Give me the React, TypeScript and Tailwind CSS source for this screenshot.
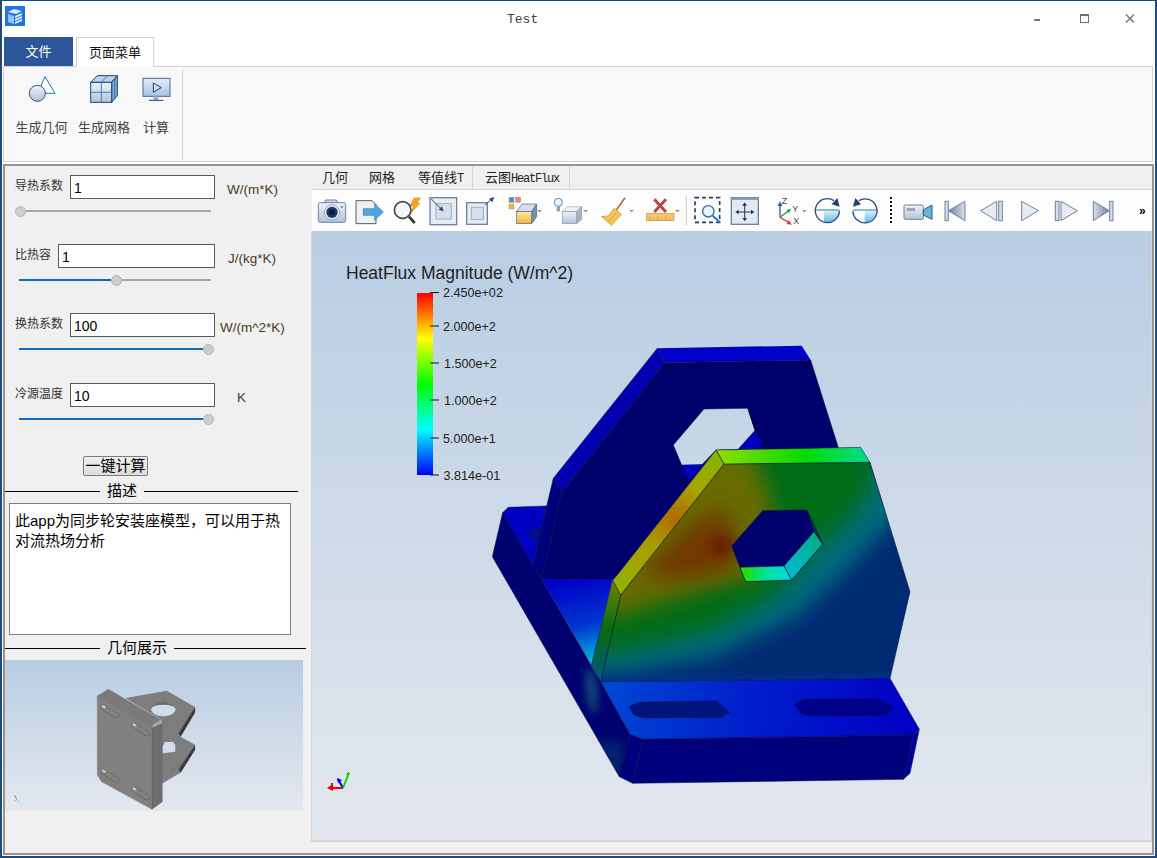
import type { ReactNode } from "react";

const cjk = "font-['Liberation_Sans','Noto_Sans_CJK_SC',sans-serif]";

function Z3({ children }: { children: ReactNode }) {
  return <g transform="translate(310 160) scale(0.33333)">{children}</g>;
}

function Z4({ children }: { children: ReactNode }) {
  return <g transform="translate(730 160) scale(0.33333)">{children}</g>;
}

function Tool({ from, to, children }: { from: number; to: number; children: ReactNode }) {
  return (
    <svg width={to - from} height={41} viewBox={`${from} 190 ${to - from} 41`} className="block shrink-0">
      {children}
    </svg>
  );
}

function Drop({ x }: { x: number }) {
  return <polygon points={`${x - 7},150 ${x + 7},150 ${x},157`} fill="#8a8a8a" />;
}

function Defs() {
  return (
    <svg width="0" height="0" className="absolute">
      <defs>
        <linearGradient id="steel" x1="0" y1="0" x2="0" y2="1">
          <stop offset="0" stopColor="#eef2f7" />
          <stop offset="1" stopColor="#b3c2d6" />
        </linearGradient>
        <linearGradient id="sky" x1="0" y1="0" x2="0" y2="1">
          <stop offset="0" stopColor="#e4edf8" />
          <stop offset="1" stopColor="#a6c3e4" />
        </linearGradient>
        <linearGradient id="amber" x1="0" y1="0" x2="0" y2="1">
          <stop offset="0" stopColor="#ffe9a0" />
          <stop offset="1" stopColor="#f5b33c" />
        </linearGradient>
        <linearGradient id="cone" x1="0" y1="0" x2="1" y2="0">
          <stop offset="0" stopColor="#6d7f96" />
          <stop offset="1" stopColor="#d8dfe8" />
        </linearGradient>
        <linearGradient id="coneR" x1="1" y1="0" x2="0" y2="0">
          <stop offset="0" stopColor="#6d7f96" />
          <stop offset="1" stopColor="#d8dfe8" />
        </linearGradient>
        <linearGradient id="wedge" x1="0" y1="0" x2="0" y2="1">
          <stop offset="0" stopColor="#d8f0fb" />
          <stop offset="1" stopColor="#62bce8" />
        </linearGradient>
      </defs>
    </svg>
  );
}

function Toolbar() {
  const frame = "#6d82a2";
  return (
    <div className="flex h-[41px] shrink-0 bg-[#fdfdfd] ml-[1px]">
      <Tool from={312} to={351}>
        <Z3>
          <rect x="45" y="120" width="36" height="12" rx="3" fill="#c9d6e6" stroke={frame} strokeWidth="3" />
          <rect x="25" y="128" width="82" height="59" rx="6" fill="url(#steel)" stroke={frame} strokeWidth="3" />
          <circle cx="66" cy="157" r="23" fill="#dbe5f1" stroke="#7f93ad" strokeWidth="2" />
          <circle cx="66" cy="157" r="17" fill="#25386b" />
          <circle cx="66" cy="157" r="9" fill="#0f1c45" />
          <circle cx="96" cy="140" r="3" fill="#5d7396" />
        </Z3>
      </Tool>
      <Tool from={351} to={388}>
        <Z3>
          <path d="M138 122 H186 L198 134 V191 H138 Z" fill="#f0f0f0" stroke="#5a5a5a" strokeWidth="3" />
          <polygon points="160,146 194,146 194,131 220,156 194,180 194,166 160,166" fill="#4ea6e2" stroke="#2d7fc0" strokeWidth="2" />
        </Z3>
      </Tool>
      <Tool from={388} to={423}>
        <Z3>
          <polygon points="312,114 332,114 320,130 330,130 302,160 311,138 300,138" fill="#f5a623" stroke="#c77a10" strokeWidth="1.5" />
          <circle cx="278" cy="150" r="25" fill="#f1f4f8" fillOpacity="0.85" stroke="#4a4a4a" strokeWidth="5" />
          <line x1="297" y1="170" x2="314" y2="189" stroke="#333" strokeWidth="8" />
        </Z3>
      </Tool>
      <Tool from={423} to={461}>
        <Z3>
          <rect x="360" y="113" width="80" height="81" fill="#e8edf3" stroke={frame} strokeWidth="4" />
          <rect x="378" y="131" width="46" height="46" fill="#d8dfe8" stroke="#a0aec0" strokeWidth="3" />
          <line x1="364" y1="117" x2="396" y2="149" stroke="#2a4a7c" strokeWidth="3" />
          <polygon points="401,154 386,149 396,139" fill="#2a4a7c" />
        </Z3>
      </Tool>
      <Tool from={461} to={499}>
        <Z3>
          <rect x="470" y="128" width="62" height="65" fill="#e8edf3" stroke={frame} strokeWidth="4" />
          <rect x="484" y="142" width="36" height="37" fill="#d8dfe8" stroke="#a0aec0" strokeWidth="3" />
          <line x1="524" y1="136" x2="544" y2="118" stroke="#2a4a7c" strokeWidth="3" />
          <polygon points="553,111 547,127 537,116" fill="#2a4a7c" />
        </Z3>
      </Tool>
      <Tool from={499} to={548}>
        <Z3>
          <rect x="597" y="112" width="15" height="15" fill="#4a8fd0" stroke="#b08a50" strokeWidth="1" />
          <rect x="617" y="112" width="15" height="15" fill="#e28a8a" stroke="#a06060" strokeWidth="1" />
          <rect x="597" y="132" width="15" height="15" fill="#f3b04a" stroke="#b07a20" strokeWidth="1" />
          <polygon points="620,155 636,132 680,132 665,155" fill="#d5dde8" stroke="#4c6490" strokeWidth="2" />
          <polygon points="665,155 680,132 680,170 665,191" fill="#7a8da8" stroke="#4c6490" strokeWidth="2" />
          <rect x="620" y="155" width="45" height="36" fill="url(#amber)" stroke="#4c6490" strokeWidth="2" />
          <Drop x={689} />
        </Z3>
      </Tool>
      <Tool from={548} to={594}>
        <Z3>
          <circle cx="745" cy="127" r="12" fill="#eaf5fd" stroke="#4a8fc0" strokeWidth="3" />
          <rect x="740" y="139" width="10" height="15" fill="#8aa0bb" />
          <polygon points="757,155 772,140 815,140 800,155" fill="#eef1f5" stroke="#9aa7b8" strokeWidth="2" />
          <polygon points="800,155 815,140 815,178 800,191" fill="#a9b4c2" stroke="#8a97a8" strokeWidth="2" />
          <rect x="757" y="155" width="43" height="36" fill="url(#steel)" stroke="#8a97a8" strokeWidth="2" />
          <Drop x={827} />
        </Z3>
      </Tool>
      <Tool from={594} to={640}>
        <Z3>
          <line x1="945" y1="113" x2="917" y2="153" stroke="#a9722a" strokeWidth="5" />
          <polygon points="912,145 934,163 905,196 874,170 895,168" fill="#f5c45a" stroke="#cf8a22" strokeWidth="2" />
          <line x1="918" y1="160" x2="896" y2="186" stroke="#cf8a22" strokeWidth="2" />
          <Drop x={965} />
        </Z3>
      </Tool>
      <Tool from={640} to={682}>
        <Z3>
          <line x1="1033" y1="118" x2="1068" y2="156" stroke="#c2413f" strokeWidth="9" />
          <line x1="1068" y1="118" x2="1033" y2="156" stroke="#c2413f" strokeWidth="9" />
          <rect x="1009" y="161" width="83" height="21" fill="#f4c76c" stroke="#d08d2c" strokeWidth="2" />
          <path d="M1020 170 V181 M1032 174 V181 M1044 170 V181 M1056 174 V181 M1068 170 V181 M1080 174 V181" stroke="#b87a20" strokeWidth="2" />
          <Drop x={1102} />
        </Z3>
      </Tool>
      <Tool from={682} to={692}>
        <Z3>
          <line x1="1129" y1="108" x2="1129" y2="196" stroke="#c9c9c9" strokeWidth="3" />
        </Z3>
      </Tool>
      <Tool from={692} to={727}>
        <Z3>
          <rect x="1155" y="113" width="74" height="74" fill="none" stroke="#2a3c63" strokeWidth="5" strokeDasharray="12 9" />
          <circle cx="1195" cy="154" r="17" fill="#e9f3fb" stroke="#3b6ea5" strokeWidth="4" />
          <line x1="1208" y1="167" x2="1230" y2="187" stroke="#2a78c2" strokeWidth="6" />
        </Z3>
      </Tool>
      <Tool from={727} to={765}>
        <Z4>
          <rect x="4" y="113" width="81" height="80" fill="#e3e9f1" stroke={frame} strokeWidth="4" />
          <rect x="4" y="113" width="81" height="7" fill="#8ba0bd" />
          <path d="M44 133 V178 M22 156 H67" stroke="#20345c" strokeWidth="3" />
          <path d="M44 127 L37 137 H51 Z M44 184 L37 174 H51 Z M16 156 L26 149 V163 Z M73 156 L63 149 V163 Z" fill="#20345c" />
        </Z4>
      </Tool>
      <Tool from={765} to={810}>
        <Z4>
          <line x1="150" y1="172" x2="150" y2="135" stroke="#2a5ab0" strokeWidth="4" />
          <polygon points="150,124 143,138 157,138" fill="#2a5ab0" />
          <line x1="150" y1="172" x2="174" y2="154" stroke="#1f9a3c" strokeWidth="4" />
          <polygon points="184,146 170,150 176,160" fill="#1f9a3c" />
          <line x1="150" y1="172" x2="174" y2="186" stroke="#e0393a" strokeWidth="4" />
          <polygon points="186,194 170,192 176,180" fill="#e0393a" />
          <text x="155" y="131" fontSize="27" fill="#444" fontFamily="Liberation Sans">Z</text>
          <text x="187" y="155" fontSize="27" fill="#444" fontFamily="Liberation Sans">Y</text>
          <text x="190" y="192" fontSize="27" fill="#444" fontFamily="Liberation Sans">X</text>
          <Drop x={223} />
        </Z4>
      </Tool>
      <Tool from={810} to={847}>
        <Z4>
          <path d="M282 152 H328 A36 36 0 0 1 282 186 Z" fill="url(#wedge)" />
          <path d="M258 150 H328" stroke="#1f73b7" strokeWidth="3" />
          <path d="M328 152 A36 36 0 1 1 312 122" fill="none" stroke="#2a4e7c" strokeWidth="4" />
          <polygon points="329,140 305,133 322,114" fill="#1f3f70" />
        </Z4>
      </Tool>
      <Tool from={847} to={885}>
        <Z4>
          <path d="M404 152 H440 A36 36 0 0 1 404 187 Z" fill="url(#wedge)" />
          <path d="M370 150 H441" stroke="#1f73b7" strokeWidth="3" />
          <path d="M369 152 A36 36 0 1 0 386 122" fill="none" stroke="#2a4e7c" strokeWidth="4" />
          <polygon points="369,140 393,133 376,114" fill="#1f3f70" />
        </Z4>
      </Tool>
      <Tool from={885} to={897}>
        <Z4>
          <line x1="483" y1="111" x2="483" y2="190" stroke="#111" strokeWidth="6" strokeDasharray="6 6" />
        </Z4>
      </Tool>
      <Tool from={897} to={937}>
        <Z4>
          <rect x="522" y="135" width="58" height="43" rx="4" fill="url(#steel)" stroke={frame} strokeWidth="3" />
          <rect x="530" y="144" width="25" height="9" fill="#9aa6b6" />
          <polygon points="580,150 606,135 606,178 580,165" fill="#63b5e0" stroke="#33557f" strokeWidth="3" />
        </Z4>
      </Tool>
      <Tool from={937} to={973}>
        <Z4>
          <rect x="645" y="124" width="10" height="58" fill="#d5dde8" stroke={frame} strokeWidth="3" />
          <polygon points="655,152 705,124 705,182" fill="url(#cone)" stroke={frame} strokeWidth="3" />
        </Z4>
      </Tool>
      <Tool from={973} to={1010}>
        <Z4>
          <polygon points="752,152 800,124 800,182" fill="#e7ecf2" stroke={frame} strokeWidth="3" />
          <rect x="806" y="124" width="11" height="58" fill="#d5dde8" stroke={frame} strokeWidth="3" />
        </Z4>
      </Tool>
      <Tool from={1010} to={1048}>
        <Z4>
          <polygon points="875,124 925,152 875,182" fill="#e7ecf2" stroke={frame} strokeWidth="3" />
        </Z4>
      </Tool>
      <Tool from={1048} to={1084}>
        <Z4>
          <rect x="976" y="124" width="11" height="58" fill="#d5dde8" stroke={frame} strokeWidth="3" />
          <polygon points="993,124 1042,152 993,182" fill="#e7ecf2" stroke={frame} strokeWidth="3" />
        </Z4>
      </Tool>
      <Tool from={1084} to={1122}>
        <Z4>
          <polygon points="1090,124 1138,152 1090,182" fill="url(#coneR)" stroke={frame} strokeWidth="3" />
          <rect x="1139" y="124" width="10" height="58" fill="#d5dde8" stroke={frame} strokeWidth="3" />
        </Z4>
      </Tool>
      <div className="flex-1 pl-[17px] pt-[11px] font-['Liberation_Sans',sans-serif] text-[12px] leading-[20px] font-bold text-black">»</div>
    </div>
  );
}

function Part() {
  const edge = "#0a0a3a";
  return (
    <g transform="translate(480 340) scale(0.33333)">
      <defs>
        <filter id="soft" filterUnits="userSpaceOnUse" x="-200" y="-200" width="1900" height="1900">
          <feGaussianBlur stdDeviation="32" />
        </filter>
        <filter id="softer" filterUnits="userSpaceOnUse" x="-200" y="-200" width="1900" height="1900">
          <feGaussianBlur stdDeviation="15" />
        </filter>
        <clipPath id="plate">
          <polygon points="732,372 1170,367 1290,755 1230,1015 362,1025 422,765" />
        </clipPath>
        <clipPath id="side">
          <polygon points="37,650 68,518 158,675 185,718 362,1025 450,1183 418,1310" />
        </clipPath>
        <linearGradient id="flangeTop" x1="362" y1="1025" x2="1300" y2="1150" gradientUnits="userSpaceOnUse">
          <stop offset="0" stopColor="#0048d4" />
          <stop offset="0.45" stopColor="#0020cc" />
          <stop offset="1" stopColor="#0000c4" />
        </linearGradient>
        <linearGradient id="wedgeBlue" x1="270" y1="720" x2="330" y2="975" gradientUnits="userSpaceOnUse">
          <stop offset="0" stopColor="#0000c8" />
          <stop offset="0.55" stopColor="#0038d0" />
          <stop offset="1" stopColor="#00c0e0" />
        </linearGradient>
        <linearGradient id="topFace" x1="708" y1="340" x2="1160" y2="340" gradientUnits="userSpaceOnUse">
          <stop offset="0" stopColor="#94dc00" />
          <stop offset="0.6" stopColor="#00dc00" />
          <stop offset="1" stopColor="#00dc8c" />
        </linearGradient>
        <linearGradient id="chamfer" x1="710" y1="340" x2="400" y2="740" gradientUnits="userSpaceOnUse">
          <stop offset="0" stopColor="#84b400" />
          <stop offset="0.25" stopColor="#a8a400" />
          <stop offset="0.45" stopColor="#b06c00" />
          <stop offset="0.65" stopColor="#aa9a00" />
          <stop offset="1" stopColor="#94b400" />
        </linearGradient>
        <linearGradient id="lower" x1="400" y1="730" x2="350" y2="1000" gradientUnits="userSpaceOnUse">
          <stop offset="0" stopColor="#6a8000" />
          <stop offset="0.5" stopColor="#086c10" />
          <stop offset="1" stopColor="#005a70" />
        </linearGradient>
        <linearGradient id="holeBottom" x1="790" y1="700" x2="930" y2="700" gradientUnits="userSpaceOnUse">
          <stop offset="0" stopColor="#20e000" />
          <stop offset="0.5" stopColor="#00e0a0" />
          <stop offset="1" stopColor="#00dcd8" />
        </linearGradient>
        <linearGradient id="holeRight" x1="915" y1="690" x2="1020" y2="590" gradientUnits="userSpaceOnUse">
          <stop offset="0" stopColor="#00b8d0" />
          <stop offset="1" stopColor="#00b080" />
        </linearGradient>
      </defs>

      <polygon points="68,518 85,502 200,498 158,675" fill="#0000c4" stroke={edge} strokeWidth="1.5" />
      <ellipse cx="166" cy="582" rx="18" ry="18" fill="#00108c" stroke={edge} strokeWidth="1.5" />
      <polygon points="532,25 965,17 992,60 555,68" fill="#0000c8" />
      <polygon points="532,25 555,68 245,458 220,415" fill="#0000b0" stroke={edge} strokeWidth="1.5" />
      <polygon points="220,415 245,458 185,718 158,675" fill="#00007c" stroke={edge} strokeWidth="1.5" />
      <path
        d="M555 68 L992 60 L1090 370 L700 420 L398 720 L185 718 L245 458 Z M672 207 L580 315 L605 375 L665 375 L708 330 L775 328 L825 272 L803 205 Z"
        fillRule="evenodd"
        fill="#00006c"
        stroke={edge}
        strokeWidth="1.5"
      />
      <polygon points="775,328 825,272 850,310 830,328" fill="#0000c0" stroke={edge} strokeWidth="1.5" />
      <polygon points="803,205 825,272 850,310" fill="#000048" />
      <polygon points="605,375 668,373 630,420" fill="#0000c4" />

      <polygon points="37,650 68,518 158,675 185,718 362,1025 450,1183 418,1310" fill="#000070" stroke={edge} strokeWidth="1.5" />
      <g clipPath="url(#side)">
        <ellipse cx="335" cy="1050" rx="13" ry="70" fill="#15607a" filter="url(#softer)" transform="rotate(-6 335 1050)" />
        <polygon points="330,1200 430,1200 430,1320 400,1320" fill="#002070" filter="url(#softer)" />
      </g>
      <polygon points="185,718 398,717 335,975" fill="url(#wedgeBlue)" stroke={edge} strokeWidth="1" />
      <polygon points="362,1025 1230,1015 1318,1168 1300,1185 488,1198 450,1183" fill="url(#flangeTop)" stroke={edge} strokeWidth="1.5" />
      <polygon points="448,1100 475,1087 710,1083 748,1118 725,1132 490,1133 462,1125" fill="#00147c" stroke={edge} strokeWidth="1.5" />
      <polygon points="942,1092 970,1078 1200,1077 1240,1105 1215,1125 985,1127 962,1118" fill="#00008a" stroke={edge} strokeWidth="1.5" />
      <polygon points="450,1183 488,1198 458,1330 418,1310" fill="#00007c" stroke={edge} strokeWidth="1.5" />
      <polygon points="488,1198 1300,1185 1270,1318 458,1330" fill="#00007c" stroke={edge} strokeWidth="1.5" />
      <polygon points="1300,1185 1318,1168 1290,1300 1270,1318" fill="#00009c" stroke={edge} strokeWidth="1.5" />

      <g clipPath="url(#plate)">
        <rect x="340" y="350" width="980" height="700" fill="#002a72" />
        <polygon
          points="200,1010 420,1000 700,950 950,830 1100,690 1240,540 1400,400 1400,200 200,200"
          fill="#006c7c"
          filter="url(#soft)"
        />
        <polygon
          points="200,960 450,930 700,870 880,770 1000,630 1130,520 1180,420 1200,200 200,200"
          fill="#006c14"
          filter="url(#soft)"
        />
        <polygon points="200,880 500,800 700,740 850,700 880,500 800,300 600,300" fill="#686c00" filter="url(#soft)" />
        <polygon points="480,700 620,560 730,500 780,620 740,700 560,720" fill="#703800" filter="url(#soft)" />
        <ellipse cx="725" cy="618" rx="32" ry="32" fill="#682000" filter="url(#softer)" />
        <polygon points="330,1060 1240,1050 1240,1010 330,1020" fill="#0036a0" filter="url(#softer)" />
      </g>
      <polygon points="732,372 1170,367 1290,755 1230,1015 362,1025 422,765" fill="none" stroke={edge} strokeWidth="1.5" />
      <polygon points="848,512 980,510 1028,612 935,720 797,725 755,618" fill="#00006c" stroke={edge} strokeWidth="1.5" />
      <polygon points="780,682 912,678 935,720 797,725" fill="url(#holeBottom)" stroke={edge} strokeWidth="1.5" />
      <polygon points="912,678 1002,575 1028,612 935,720" fill="url(#holeRight)" stroke={edge} strokeWidth="1.5" />
      <polygon points="980,510 1002,575 1028,612" fill="#003a50" stroke={edge} strokeWidth="1.5" />

      <polygon points="708,330 1142,322 1170,367 732,372" fill="url(#topFace)" stroke={edge} strokeWidth="1.5" />
      <polygon points="708,330 732,372 422,765 398,722" fill="url(#chamfer)" stroke={edge} strokeWidth="1.5" />
      <polygon points="398,722 422,765 362,1025 335,975" fill="url(#lower)" stroke={edge} strokeWidth="1.5" />
    </g>
  );
}

function Legend() {
  const ticks: [number, number, string][] = [
    [292.5, 443, "2.450e+02"],
    [326, 443, "2.000e+2"],
    [363, 444, "1.500e+2"],
    [400, 444, "1.000e+2"],
    [438, 443, "5.000e+1"],
    [475, 443.5, "3.814e-01"],
  ];
  return (
    <g fontFamily="Liberation Sans, sans-serif" fill="#222">
      <defs>
        <linearGradient id="rainbow" x1="0" y1="0" x2="0" y2="1">
          <stop offset="0" stopColor="#ff0000" />
          <stop offset="0.25" stopColor="#ffff00" />
          <stop offset="0.5" stopColor="#00ff00" />
          <stop offset="0.75" stopColor="#00ffff" />
          <stop offset="1" stopColor="#0000ff" />
        </linearGradient>
      </defs>
      <text x="346" y="279" fontSize="17.5">HeatFlux Magnitude (W/m^2)</text>
      <rect x="417" y="293" width="16" height="182" fill="url(#rainbow)" />
      {ticks.map(([y, x, label]) => (
        <g key={label}>
          <line x1="430" x2="439" y1={y} y2={y} stroke="#111" strokeWidth="1" />
          <text x={x} y={y + 4.5} fontSize="12.6">{label}</text>
        </g>
      ))}
      <path d="M343 788 H329" stroke="#f00000" strokeWidth="2" />
      <polygon points="327,788 333,784 333,791" fill="#f00000" />
      <path d="M343 788 L338 779" stroke="#0000e0" strokeWidth="2" />
      <polygon points="337,778 342,780 338,783" fill="#0000e0" />
      <path d="M343 788 L349 773" stroke="#00dc00" strokeWidth="2" />
      <path d="M331 786 L333 783 M333 786 L331 783" stroke="#d00000" strokeWidth="1" />
      <path d="M346 775 L349 772" stroke="#00b000" strokeWidth="1" />
    </g>
  );
}

function Thumbnail() {
  return (
    <svg width={298} height={151} viewBox="5 660 298 151" className="block bg-gradient-to-b from-[#b8cde3] to-[#e4e8ee]">
      <g transform="translate(0 480) scale(0.33333)">
        <polygon points="378,655 500,633 585,682 585,695 540,770 487,785 487,720" fill="#7d7d7d" stroke="#666" strokeWidth="1" />
        <polygon points="585,682 585,698 542,770 536,760" fill="#3c3c3c" />
        <ellipse cx="490" cy="688" rx="37" ry="22" fill="#cfdcea" stroke="#555" strokeWidth="1" />
        <path d="M453 688 A37 22 0 0 1 527 688 A37 14 0 0 0 453 688 Z" fill="#6b6b6b" />
        <polygon points="487,785 540,770 585,795 585,808 540,878 487,910" fill="#7d7d7d" stroke="#666" strokeWidth="1" />
        <polygon points="585,795 585,810 542,878 536,868" fill="#3c3c3c" />
        <path d="M487 800 A20 18 0 0 1 526 795 L526 815 L487 820 Z" fill="#d2deea" />
        <path d="M487 800 A20 18 0 0 1 526 795 L518 785 L495 786 Z" fill="#6e6e6e" />
        <polygon points="456,745 487,722 487,965 456,988" fill="#6e6e6e" stroke="#555" strokeWidth="1" />
        <polygon points="292,648 456,745 456,988 305,905 292,885" fill="#808080" stroke="#666" strokeWidth="1" />
        <polygon points="292,648 325,628 487,722 456,745" fill="#7a7a7a" stroke="#666" strokeWidth="1" />
        <polygon points="456,736 480,720 487,722 486,730 460,742" fill="#a8a8a8" />
        <g fill="none" strokeLinecap="round">
          <line x1="310" y1="682" x2="350" y2="707" stroke="#5f5f5f" strokeWidth="16" />
          <line x1="310" y1="682" x2="350" y2="707" stroke="#828282" strokeWidth="13" />
          <line x1="402" y1="736" x2="442" y2="761" stroke="#5f5f5f" strokeWidth="16" />
          <line x1="402" y1="736" x2="442" y2="761" stroke="#828282" strokeWidth="13" />
          <line x1="310" y1="875" x2="350" y2="900" stroke="#5f5f5f" strokeWidth="16" />
          <line x1="310" y1="875" x2="350" y2="900" stroke="#828282" strokeWidth="13" />
          <line x1="402" y1="928" x2="442" y2="953" stroke="#5f5f5f" strokeWidth="16" />
          <line x1="402" y1="928" x2="442" y2="953" stroke="#828282" strokeWidth="13" />
        </g>
        <path d="M306 678 L316 683 M398 732 L408 737 M306 871 L316 876 M398 924 L408 929" stroke="#c8c8c8" strokeWidth="7" />
        <path d="M50 958 L44 945" stroke="#5a5ae0" strokeWidth="2" />
        <path d="M50 958 L44 964" stroke="#e07070" strokeWidth="2" />
        <path d="M50 958 L60 968" stroke="#70d090" strokeWidth="2" />
      </g>
    </svg>
  );
}

function Slider({ pad, fill, rest }: { pad: string; fill?: string; rest: string }) {
  return (
    <div className={`flex items-center h-[12px] mt-[6px] ${pad}`}>
      {fill && <div className={`h-[2.5px] bg-[#0f6cbd] ${fill}`} />}
      <div className="w-[11px] h-[11px] rounded-full bg-[#cdcdcd] border border-[#b4b4b4] shrink-0" />
      {rest !== "w-0" && <div className={`h-[2.5px] bg-[#a8a8a8] ${rest}`} />}
    </div>
  );
}

function Field({ label, value, unit, labelW, inputW, unitPad }: {
  label: string;
  value: string;
  unit: string;
  labelW: string;
  inputW: string;
  unitPad: string;
}) {
  return (
    <div className="flex h-[24px] pl-[10px]">
      <div className={`${labelW} text-[12px] leading-[22px] text-[#333]`}>{label}</div>
      <div className={`${inputW} h-[24px] bg-white border border-[#5a5a5a] px-[3px] text-[14px] leading-[24px] text-black font-['Liberation_Sans',sans-serif]`}>
        {value}
      </div>
      <div className={`${unitPad} text-[13.5px] leading-[30px] text-[#4a3a20] whitespace-nowrap font-['Liberation_Sans',sans-serif]`}>{unit}</div>
    </div>
  );
}

function Section({ label, rest }: { label: string; rest: string }) {
  return (
    <div className="flex items-center h-[16px] text-[15px] text-black">
      <div className="w-[95px] h-px bg-black" />
      <div className="px-[7px] whitespace-nowrap leading-[16px]">{label}</div>
      <div className={`${rest} h-px bg-black`} />
    </div>
  );
}

export default function App() {
  return (
    <div className={`w-[1157px] h-[858px] flex flex-col overflow-hidden bg-white border-x-2 border-b-[2px] border-t border-[#1d4a80] ${cjk}`}>
      <Defs />
      <div className="flex items-center h-[36px] shrink-0">
        <svg width="20" height="20" viewBox="0 0 20 20" className="ml-[3px] shrink-0 -mt-[6px]">
          <rect width="20" height="20" fill="#1b75e8" />
          <path d="M3 6 L9 3 L17 5 L11 8 Z" fill="#dbe9fb" />
          <path d="M3 8 L3 16 L9 18 L9 10 Z" fill="#9cc3f5" />
          <path d="M10 10 L17 7 V9 L10 12 Z M10 13 L17 10 V12 L10 15 Z M10 16 L17 13 V15 L10 18 Z" fill="#e6f0fc" />
        </svg>
        <div className="ml-[482px] mt-[2px] font-['Liberation_Mono',monospace] text-[13px] text-[#444] leading-[16px]">Test</div>
        <div className="ml-auto flex items-center h-full">
          <svg width="46" height="36" viewBox="0 0 46 36"><rect x="19" y="18" width="6" height="2" fill="#777" /></svg>
          <svg width="46" height="36" viewBox="0 0 46 36"><rect x="19.5" y="13.5" width="8" height="8" fill="none" stroke="#707070" /><rect x="19" y="13" width="9" height="2" fill="#707070" /></svg>
          <svg width="46" height="36" viewBox="0 0 46 36" className="mr-[2px]"><path d="M19 13.5 L27 21.5 M27 13.5 L19 21.5" stroke="#707070" strokeWidth="1.3" /></svg>
        </div>
      </div>

      <div className="flex h-[29px] shrink-0 text-[13px]">
        <div className="ml-[2px] w-[69px] h-[29px] bg-[#2b579a] text-white flex items-center justify-center">文件</div>
        <div className="ml-[3px] w-[78px] h-[30px] bg-white border-x border-t border-[#d2d2d2] text-[#111] flex items-center justify-center z-10">页面菜单</div>
      </div>

      <div className="ml-[1px] w-[1150px] h-[96px] shrink-0 bg-[#f8f8f8] border border-[#d2d2d2] pt-[2px]">
        <div className="w-[179px] h-[91px] border-r border-[#d2d2d2] pt-[2px] flex text-[13px] text-[#444]">
          <div className="w-[6px]" />
          <div className="w-[63px] flex flex-col items-center">
            <svg width="63" height="40" viewBox="30 216 189 120">
              <polygon points="135,233 165,283 113,283" fill="#fff" stroke="#1a75bb" strokeWidth="3" />
              <circle cx="112" cy="283" r="24" fill="url(#steel)" stroke="#3c4a72" strokeWidth="3" />
            </svg>
            <div className="mt-[8px] leading-[18px] whitespace-nowrap">生成几何</div>
          </div>
          <div className="w-[62px] flex flex-col items-center">
            <svg width="62" height="40" viewBox="219 216 186 120">
              <polygon points="272,250 292,230 352,230 335,250" fill="#bcd4ea" stroke="#24406f" strokeWidth="3" />
              <polygon points="335,250 352,230 352,290 335,310" fill="#7fa9cf" stroke="#24406f" strokeWidth="3" />
              <rect x="272" y="250" width="63" height="60" fill="url(#steel)" stroke="#24406f" strokeWidth="3" />
              <path d="M304 250 V310 M272 280 H335 M304 250 L322 230 M344 240 V300" stroke="#1a75bb" strokeWidth="2.5" fill="none" />
            </svg>
            <div className="mt-[8px] leading-[18px] whitespace-nowrap">生成网格</div>
          </div>
          <div className="w-[42px] flex flex-col items-center">
            <svg width="42" height="40" viewBox="405 216 126 120">
              <rect x="429" y="238" width="81" height="54" fill="url(#sky)" stroke="#4c6490" strokeWidth="3" />
              <polygon points="460,252 484,266 460,280" fill="none" stroke="#24406f" strokeWidth="3" />
              <rect x="460" y="292" width="15" height="11" fill="#9fb2c9" />
              <line x1="447" y1="304" x2="490" y2="304" stroke="#24406f" strokeWidth="3" />
            </svg>
            <div className="mt-[8px] leading-[18px] whitespace-nowrap">计算</div>
          </div>
        </div>
      </div>

      <div className="ml-[1px] mt-[2px] w-[1151px] flex-1 min-h-0 bg-[#f0f0f0] border-2 border-[#949494] flex">
        <div className="w-[306px] shrink-0 pt-[9px]">
          <Field label="导热系数" value="1" unit="W/(m*K)" labelW="w-[55px]" inputW="w-[145px]" unitPad="pl-[12px]" />
          <Slider pad="pl-[10px]" rest="w-[185px]" />
          <div className="h-[27px]" />
          <Field label="比热容" value="1" unit="J/(kg*K)" labelW="w-[43px]" inputW="w-[157px]" unitPad="pl-[13px]" />
          <Slider pad="pl-[14px]" fill="w-[92px]" rest="w-[89px]" />
          <div className="h-[27px]" />
          <Field label="换热系数" value="100" unit="W/(m^2*K)" labelW="w-[55px]" inputW="w-[145px]" unitPad="pl-[5px]" />
          <Slider pad="pl-[14px]" fill="w-[184px]" rest="w-0" />
          <div className="h-[28px]" />
          <Field label="冷源温度" value="10" unit="K" labelW="w-[55px]" inputW="w-[145px]" unitPad="pl-[22px]" />
          <Slider pad="pl-[14px]" fill="w-[184px]" rest="w-0" />
          <div className="pl-[78px] mt-[31px]">
            <button className="w-[65px] h-[20px] rounded-[2px] border border-[#7a7a7a] bg-gradient-to-b from-[#efefef] to-[#dcdcdc] text-[15px] leading-[18px] text-black whitespace-nowrap flex items-center justify-center">
              一键计算
            </button>
          </div>
          <div className="mt-[7px]">
            <Section label="描述" rest="w-[154px]" />
          </div>
          <div className="ml-[4px] mt-[4px] w-[282px] h-[132px] bg-white border-[1.5px] border-[#808080] px-[5px] pt-[7px] text-[15px] leading-[20px] text-black">
            此app为同步轮安装座模型，可以用于热对流热场分析
          </div>
          <div className="mt-[5px]">
            <Section label="几何展示" rest="w-[132px]" />
          </div>
          <div className="mt-[4px]">
            <Thumbnail />
          </div>
        </div>

        <div className="flex-1 min-w-0 flex flex-col">
          <div className="h-[24px] shrink-0 flex text-[13px] text-[#222] leading-[23px] border-b border-[#d6d6d6]">
            <div className="w-[47px] pl-[11px]">几何</div>
            <div className="w-[49px] pl-[11px]">网格</div>
            <div className="w-[66px] pl-[11px] border-r border-[#d6d6d6] whitespace-nowrap">
              等值线<span className="font-['Liberation_Mono',monospace] text-[12px] tracking-[-1.2px]">T</span>
            </div>
            <div className="w-[97px] pl-[12px] border-r border-[#d6d6d6] whitespace-nowrap">
              云图<span className="font-['Liberation_Mono',monospace] text-[12px] tracking-[-1.2px]">HeatFlux</span>
            </div>
          </div>
          <Toolbar />
          <div className="h-[611px] shrink-0 border-l-[1.5px] border-b-2 border-r border-[#d6d6d6] bg-gradient-to-b from-[#b8cde3] to-[#e4e8ee]">
            <svg width={840} height={609} viewBox="312 231 840 609" className="block">
              <Part />
              <Legend />
            </svg>
          </div>
        </div>
      </div>
      <div className="h-[1px] shrink-0" />
    </div>
  );
}
